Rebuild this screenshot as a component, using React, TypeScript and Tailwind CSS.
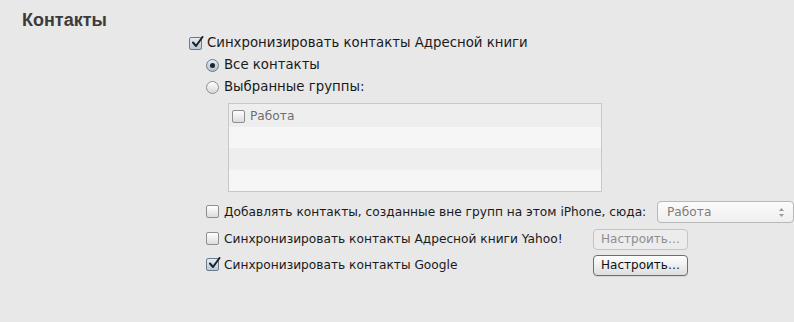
import type { ReactNode } from "react";

const FONT = "font-['DejaVu_Sans','Liberation_Sans',sans-serif]";

function Checkbox({ checked = false }: { checked?: boolean }) {
  return (
    <span
      className={[
        "relative inline-block w-[13px] h-[13px] shrink-0 rounded-[2px] border",
        checked
          ? "border-[#6b7a8c] bg-gradient-to-b from-[#e4ecf5] to-[#b9c8d9]"
          : "border-[#8e8e8e] bg-gradient-to-b from-[#ffffff] to-[#dcdcdc]",
      ].join(" ")}
    >
      {checked && (
        <svg className="absolute left-[1px] -top-[2px]" width="13" height="13" viewBox="0 0 13 13">
          <path d="M2 6.5 L5 10 L11.5 1" fill="none" stroke="#1f1f1f" strokeWidth="2" strokeLinecap="round" strokeLinejoin="round" />
        </svg>
      )}
    </span>
  );
}

function Radio({ checked = false }: { checked?: boolean }) {
  return (
    <span
      className={[
        "inline-flex items-center justify-center w-[13px] h-[13px] shrink-0 rounded-full border",
        checked
          ? "border-[#6b7a8c] bg-gradient-to-b from-[#e4ecf5] to-[#aebfd3]"
          : "border-[#8e8e8e] bg-gradient-to-b from-[#ffffff] to-[#d6d6d6]",
      ].join(" ")}
    >
      {checked && <span className="block w-[5px] h-[5px] rounded-full bg-[#222]" />}
    </span>
  );
}

function Row({ control, children }: { control: ReactNode; children: ReactNode }) {
  return (
    <div className="flex items-center gap-[5px] h-[22px] text-[13.3px]">
      {control}
      <span className="whitespace-nowrap">{children}</span>
    </div>
  );
}

function Button({ disabled = false, children }: { disabled?: boolean; children: ReactNode }) {
  return (
    <button
      className={[
        "h-[21px] w-[95px] rounded-[4px] border text-[12px] leading-none",
        disabled
          ? "border-[#c4c4c4] bg-[#ececec] text-[#8e8e8e]"
          : "border-[#6e6e6e] bg-gradient-to-b from-[#ffffff] to-[#dedede] text-[#111] shadow-[0_1px_0_rgba(0,0,0,0.08)]",
      ].join(" ")}
    >
      {children}
    </button>
  );
}

export default function App() {
  return (
    <div className={`w-[794px] h-[322px] bg-[#e8e8e8] text-[12.2px] text-[#1a1a1a] ${FONT}`}>
      {/* Header */}
      <div className="h-[32px] pl-[22px] pt-[9px]">
        <h1 className="font-['Liberation_Sans',sans-serif] text-[18px] font-bold text-[#3b3b3b] leading-[22px]">
          Контакты
        </h1>
      </div>

      <div className="pl-[189px]">
        <Row control={<Checkbox checked />}>Синхронизировать контакты Адресной книги</Row>

        <div className="pl-[17px]">
          <Row control={<Radio checked />}>Все контакты</Row>
          <Row control={<Radio />}>Выбранные группы:</Row>

          {/* Groups list */}
          <div className="ml-[22px] mt-[5px] w-[374px] border border-[#c8c8c8]">
            <div className="flex items-center gap-[5px] h-[23px] pl-[3px] pt-[1px] bg-[#eeeeee] text-[#6e6e6e]">
              <Checkbox />
              <span>Работа</span>
            </div>
            <div className="h-[21px] bg-[#f6f6f6]" />
            <div className="h-[22px] bg-[#eeeeee]" />
            <div className="h-[21px] bg-[#f6f6f6]" />
          </div>

          <div className="mt-[9px] flex items-center h-[22px]">
            <div className="flex items-center gap-[5px] w-[450px]">
              <Checkbox />
              <span className="whitespace-nowrap">Добавлять контакты, созданные вне групп на этом iPhone, сюда:</span>
            </div>
            <div className="ml-auto flex items-center justify-between w-[137px] h-[22px] rounded-[4px] border border-[#b8b8b8] bg-gradient-to-b from-[#fbfbfb] to-[#efefef] pl-[9px] pr-[8px] text-[#7d7d7d]">
              <span>Работа</span>
              <svg width="7" height="11" viewBox="0 0 7 11">
                <path d="M3.5 1 L6 4 H1 Z" fill="#9a9a9a" />
                <path d="M3.5 10 L6 7 H1 Z" fill="#9a9a9a" />
              </svg>
            </div>
          </div>

          <div className="mt-[5px] flex items-center h-[22px]">
            <div className="flex items-center gap-[5px] w-[387px]">
              <Checkbox />
              <span className="whitespace-nowrap">Синхронизировать контакты Адресной книги Yahoo!</span>
            </div>
            <Button disabled>Настроить…</Button>
          </div>

          <div className="mt-[4px] flex items-center h-[22px]">
            <div className="flex items-center gap-[5px] w-[387px]">
              <Checkbox checked />
              <span className="whitespace-nowrap">Синхронизировать контакты Google</span>
            </div>
            <Button>Настроить…</Button>
          </div>
        </div>
      </div>
    </div>
  );
}
